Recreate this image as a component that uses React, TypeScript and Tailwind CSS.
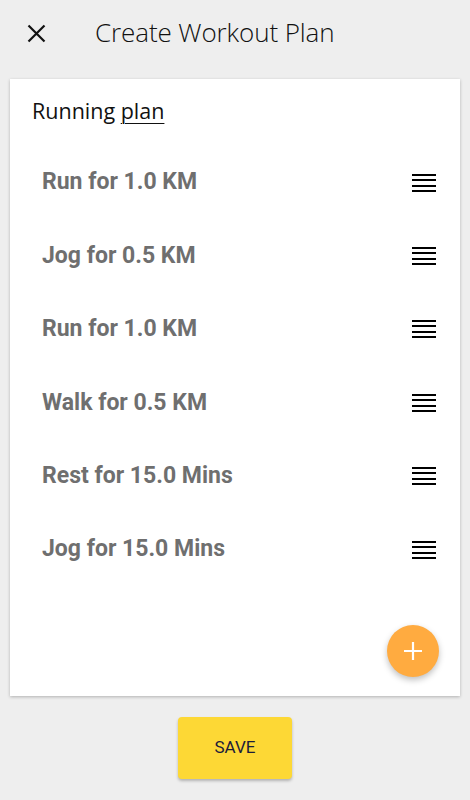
import React from "react";

const items = [
  "Run for 1.0 KM",
  "Jog for 0.5 KM",
  "Run for 1.0 KM",
  "Walk for 0.5 KM",
  "Rest for 15.0 Mins",
  "Jog for 15.0 Mins",
];

function Handle() {
  return (
    <svg width="24" height="18" viewBox="0 0 24 18" className="shrink-0 block">
      <rect x="0" y="0" width="24" height="2" fill="#000" />
      <rect x="0" y="5" width="24" height="2" fill="#000" />
      <rect x="0" y="11" width="24" height="2" fill="#000" />
      <rect x="0" y="16" width="24" height="2" fill="#000" />
    </svg>
  );
}

export default function App() {
  return (
    <div className="w-[470px] h-[800px] bg-[#eeeeee] flex flex-col overflow-hidden">
      <div className="h-[66px] flex items-center shrink-0">
        <div className="w-[95px] pl-[27px] flex items-center">
          <svg width="19" height="19" viewBox="0 0 19 19">
            <path d="M1.5 1.5 L17.5 17.5 M17.5 1.5 L1.5 17.5" stroke="#111" strokeWidth="2.2" />
          </svg>
        </div>
        <div className="text-[26px] text-[#111] font-['Open_Sans',sans-serif] font-light tracking-[-0.1px] pb-[1px]">
          Create Workout Plan
        </div>
      </div>
      <div className="mx-[10px] mt-[13px] h-[617px] bg-white shadow-[0_1px_3px_rgba(0,0,0,0.25)] flex flex-col relative">
        <div className="h-[64px] pl-[22px] flex items-center text-[21.5px] text-[#111] font-['Open_Sans',sans-serif]">
          <span>
            Running <span className="underline underline-offset-[4px] decoration-1">plan</span>
          </span>
        </div>
        <div className="flex-1 flex flex-col pt-[3px]">
          {items.map((t, i) => (
            <div key={i} className="h-[73.4px] flex items-center justify-between pl-[32px] pr-[24px]">
              <span className="font-['Roboto',sans-serif] font-bold text-[23px] text-[#6f6f6f]">{t}</span>
              <Handle />
            </div>
          ))}
        </div>
        <div className="absolute left-[377px] top-[546px] w-[52px] h-[52px] rounded-full bg-[#ffab40] shadow-[0_3px_6px_rgba(0,0,0,0.25)] flex items-center justify-center">
          <svg width="20" height="20" viewBox="0 0 20 20">
            <path d="M10 1 V19 M1 10 H19" stroke="#fff" strokeWidth="2.2" />
          </svg>
        </div>
      </div>
      <div className="flex justify-center mt-[21px]">
        <div className="w-[114px] h-[62px] rounded-[4px] bg-[#fdd835] shadow-[0_2px_3px_rgba(0,0,0,0.25)] flex items-center justify-center font-['Roboto',sans-serif] font-normal text-[17px] text-[#1c1c3a]">
          SAVE
        </div>
      </div>
    </div>
  );
}
